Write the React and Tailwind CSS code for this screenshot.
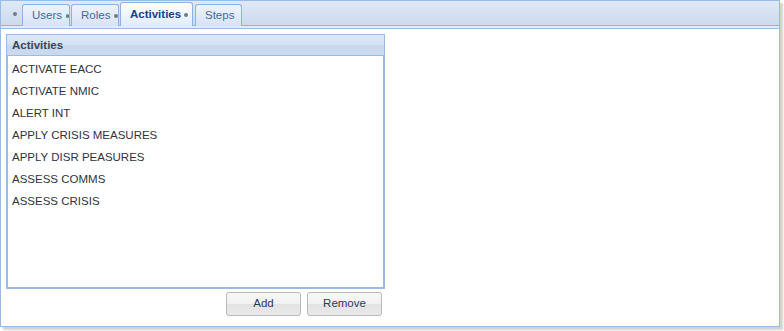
const activities = [
  'ACTIVATE EACC',
  'ACTIVATE NMIC',
  'ALERT INT',
  'APPLY CRISIS MEASURES',
  'APPLY DISR PEASURES',
  'ASSESS COMMS',
  'ASSESS CRISIS',
];

const font = { fontFamily: '"Liberation Sans", Arial, sans-serif' };

function Tab({ label, active, width, dot = true }) {
  if (active) {
    return (
      <div
        className={`flex h-[24px] items-center rounded-t-[3px] border border-b-0 border-[#8db2e3] bg-gradient-to-b from-white to-[#deecfd] pl-[9px] text-[11.5px] font-bold text-[#15428b] ${width}`}
      >
        <span>{label}</span>
        {dot && <span className="ml-[3px] mt-[1px] h-[4px] w-[4px] rounded-full bg-[#6b7a8c]" />}
      </div>
    );
  }
  return (
    <div
      className={`flex h-[22px] items-center rounded-t-[3px] border border-b-0 border-[#8db2e3] bg-gradient-to-b from-[#eef3fb] to-[#d6e3f4] pl-[9px] text-[11.5px] text-[#416aa3] ${width}`}
    >
      <span>{label}</span>
      {dot && <span className="ml-[4px] mt-[1px] h-[4px] w-[4px] rounded-full bg-[#6b7a8c]" />}
    </div>
  );
}

function Button({ children }) {
  return (
    <button className="relative h-[24px] w-[75px] overflow-hidden rounded-[3px] border border-[#b9b9b9] bg-[linear-gradient(to_bottom,#f8f8f8_0%,#f1f1f1_50%,#e3e3e3_51%,#e9e9e9_100%)] text-[11.5px] text-[#2d3b4f]">
      {children}
    </button>
  );
}

export default function App() {
  return (
    <div className="h-[331px] w-[784px] bg-white" style={font}>
      <div className="flex h-[327px] w-[780px] flex-col border border-[#99bbe8] shadow-[3px_3px_2px_rgba(0,0,0,0.18)]">
        {/* tab strip */}
        <div className="flex h-[25px] items-end border-b border-[#8db2e3] bg-gradient-to-b from-[#e0e9f6] to-[#ccdaee]">
          <div className="mb-[9px] ml-[12px] mr-[5px] h-[4px] w-[4px] rounded-full bg-[#6b7a8c]" />
          <div className="-mb-px flex items-end">
            <Tab label="Users" width="w-[48px]" />
            <div className="w-[1px]" />
            <Tab label="Roles" width="w-[48px]" />
            <div className="w-[1px]" />
            <Tab label="Activities" active width="w-[73px]" />
            <div className="w-[2px]" />
            <Tab label="Steps" dot={false} width="w-[47px]" />
          </div>
        </div>
        <div className="h-[3px] border-b border-[#99bbe8] bg-[#deecfd]" />

        {/* body */}
        <div className="flex flex-col pl-[5px] pt-[5px]">
          <div className="flex h-[255px] w-[379px] flex-col border border-[#99bbe8]">
            <div className="flex h-[21px] items-center border-b border-[#99bbe8] bg-[linear-gradient(to_bottom,#dde8f6_0%,#d4e2f3_45%,#c6d7ee_55%,#cbdaef_100%)] pl-[5px] pt-[1px] text-[11.5px] font-bold text-[#3c4656]">
              Activities
            </div>
            <div className="flex-1 border-x border-b border-[#99bbe8] bg-white pt-[3px]">
              {activities.map((a) => (
                <div key={a} className="flex h-[22px] items-center pl-[4px] text-[11.5px] text-[#2e3440]">
                  {a}
                </div>
              ))}
            </div>
          </div>
          <div className="mt-[3px] flex w-[379px] justify-end gap-[6px] pr-[3px]">
            <Button>Add</Button>
            <Button>Remove</Button>
          </div>
        </div>
      </div>
    </div>
  );
}
